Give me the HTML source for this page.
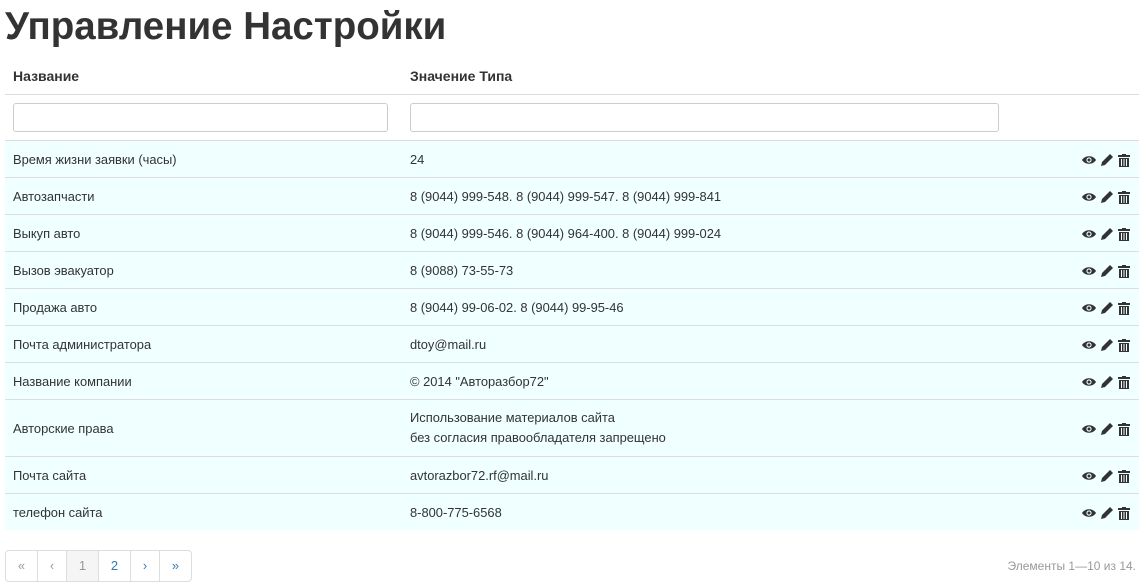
<!DOCTYPE html>
<html><head><meta charset="utf-8"><style>
body{margin:0;font-family:"Liberation Sans",sans-serif;font-size:12.9px;color:#333;background:#fff;width:1141px;height:584px;overflow:hidden;position:relative}
h1{position:absolute;left:5px;top:5px;margin:0;font-size:38.5px;font-weight:bold;line-height:44px}
table{position:absolute;left:5px;top:58px;width:1134px;border-collapse:collapse}
th{text-align:left;font-weight:bold;font-size:14px;height:36px;padding:0 8px;border-bottom:1px solid #ddd;vertical-align:middle}
td{padding:0 8px;border-top:1px solid #ddd;height:36px;vertical-align:middle}
tr.f td{height:45px;border-top:none}
tr.d td{background:#f0ffff}
input{display:block;height:29px;border:1px solid #ccc;border-radius:3px;box-sizing:border-box;background:#fff}
.ic{text-align:right;white-space:nowrap;padding-right:9px}
.ic svg{vertical-align:middle;margin-left:5px}
.pg{position:absolute;left:5px;top:550px;display:flex;border:1px solid #ddd;border-radius:4px;overflow:hidden}
.pg span{display:block;height:30px;line-height:30px;text-align:center;color:#337ab7;border-left:1px solid #ddd;font-size:13px}
.pg span:first-child{border-left:none}
.sum{position:absolute;right:5px;top:559px;color:#999;font-size:12px}
</style></head><body>
<h1>Управление Настройки</h1>
<table>
<tr><th style="width:381px">Название</th><th style="width:573px">Значение Типа</th><th></th></tr>
<tr class="f"><td><input style="width:375px"></td><td><input style="width:589px"></td><td></td></tr>
<tr class="d"><td>Время жизни заявки (часы)</td><td>24</td><td class="ic">I</td></tr>
<tr class="d"><td>Автозапчасти</td><td>8 (9044) 999-548. 8 (9044) 999-547. 8 (9044) 999-841</td><td class="ic">I</td></tr>
<tr class="d"><td>Выкуп авто</td><td>8 (9044) 999-546. 8 (9044) 964-400. 8 (9044) 999-024</td><td class="ic">I</td></tr>
<tr class="d"><td>Вызов эвакуатор</td><td>8 (9088) 73-55-73</td><td class="ic">I</td></tr>
<tr class="d"><td>Продажа авто</td><td>8 (9044) 99-06-02. 8 (9044) 99-95-46</td><td class="ic">I</td></tr>
<tr class="d"><td>Почта администратора</td><td>dtoy@mail.ru</td><td class="ic">I</td></tr>
<tr class="d"><td>Название компании</td><td>© 2014 "Авторазбор72"</td><td class="ic">I</td></tr>
<tr class="d"><td style="height:56px">Авторские права</td><td style="line-height:20px">Использование материалов сайта<br>без согласия правообладателя запрещено</td><td class="ic">I</td></tr>
<tr class="d"><td>Почта сайта</td><td>avtorazbor72.rf@mail.ru</td><td class="ic">I</td></tr>
<tr class="d"><td>телефон сайта</td><td>8-800-775-6568</td><td class="ic">I</td></tr>
</table>
<div class="pg"><span style="width:31px;color:#999">«</span><span style="width:28px;color:#999">‹</span><span style="width:31px;background:#f5f5f5;color:#999">1</span><span style="width:31px">2</span><span style="width:28px">›</span><span style="width:31px">»</span></div>
<div class="sum">Элементы 1—10 из 14.</div>
<script>
var ic='<svg width="14" height="12" viewBox="0 0 14 12"><path d="M0 6C3 1 11 1 14 6C11 11 3 11 0 6Z" fill="#333"/><circle cx="7" cy="6" r="2.6" fill="#f0ffff"/><circle cx="7" cy="6" r="1.5" fill="#333"/></svg><svg width="12" height="12" viewBox="0 0 12 12"><path d="M9 0L12 3L4 11L0 12L1 8Z" fill="#333"/></svg><svg width="12" height="13" viewBox="0 0 12 13"><path d="M4 0H8V1H12V3H0V1H4Z M1 4H11V13H1Z" fill="#333"/><path d="M3.5 5V12M6 5V12M8.5 5V12" stroke="#f0ffff" stroke-width="1"/></svg>';
document.querySelectorAll('.ic').forEach(function(e){e.innerHTML=ic});
</script>
</body></html>
